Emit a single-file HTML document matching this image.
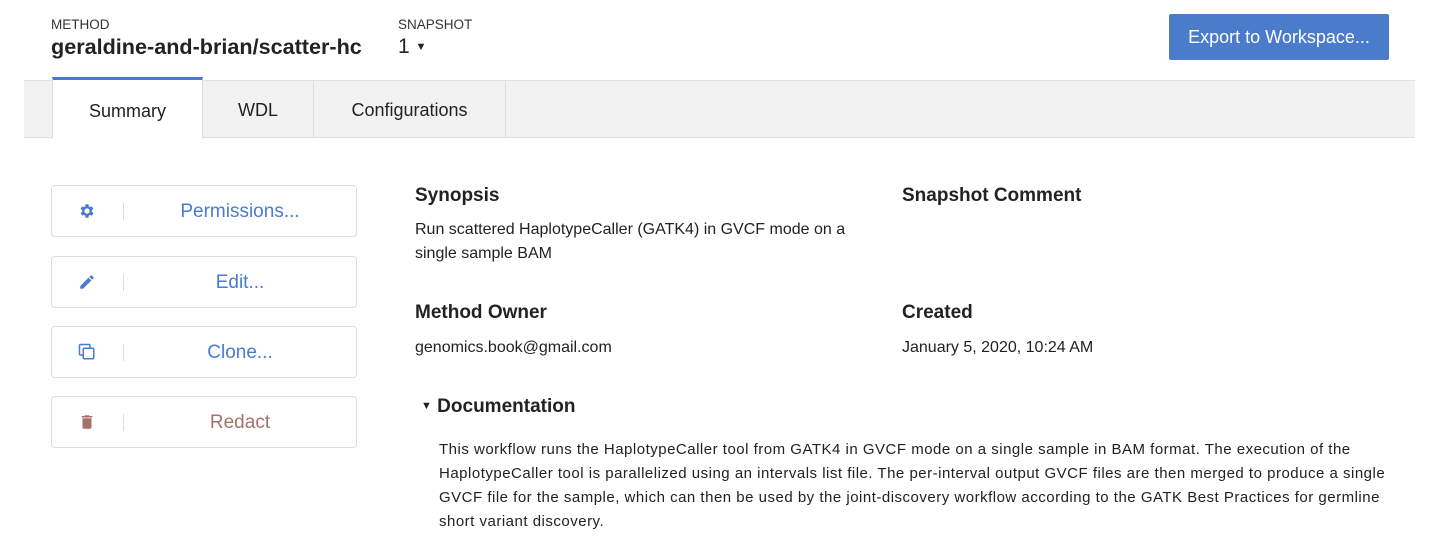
<!DOCTYPE html>
<html><head><meta charset="utf-8"><style>
*{margin:0;padding:0;box-sizing:border-box}
body{width:1439px;height:551px;background:#fff;font-family:"Liberation Sans",sans-serif;color:#2a2a2a;position:relative;overflow:hidden}
.a{position:absolute;white-space:nowrap}
.lbl{font-size:13.5px;color:#333}
.tabbar{position:absolute;left:24px;top:80px;width:1391px;height:58px;background:#f2f2f2;border-top:1px solid #e2e2e2;border-bottom:1px solid #ddd}
.tab{position:absolute;top:0;height:57px;font-size:18px;line-height:58px;text-align:center;border-right:1px solid #ddd;color:#222}
.btn{position:absolute;left:51px;width:306px;height:52px;border:1px solid #ddd;border-radius:4px;font-size:19px;color:#4a7bd0}
.btn .ic{position:absolute;left:26px;top:16px;width:18px;height:18px}
.btn .sep{position:absolute;left:71px;top:17px;width:1px;height:17px;background:#ddd}
.btn .t{position:absolute;left:72px;right:0;top:0;line-height:52px;text-align:center}
h3{position:absolute;font-size:19px;font-weight:bold;color:#222;white-space:nowrap}
.p{position:absolute;font-size:16px;line-height:24px;color:#222;white-space:nowrap}
</style></head><body>
<div class="a lbl" style="left:51px;top:17px">METHOD</div>
<div class="a" style="left:51px;top:34px;font-size:21.6px;font-weight:bold;color:#222">geraldine-and-brian/scatter-hc</div>
<div class="a lbl" style="left:398px;top:17px">SNAPSHOT</div>
<div class="a" style="left:398px;top:35px;font-size:21px;color:#222">1 <span style="font-size:11px;vertical-align:3px">▼</span></div>
<div class="a" style="left:1169px;top:14px;width:220px;height:46px;background:#4a7ccb;border-radius:2px;color:#fff;font-size:18px;line-height:46px;text-align:center">Export to Workspace...</div>
<div class="tabbar">
<div class="tab" style="left:28px;width:151px;background:#fff;top:-4px;height:62px;line-height:62px;border-top:3px solid #4a7bd0;border-left:1px solid #ddd">Summary</div>
<div class="tab" style="left:179px;width:111px">WDL</div>
<div class="tab" style="left:290px;width:192px">Configurations</div>
</div>

<div class="btn" style="top:185px"><svg class="ic" viewBox="0 0 24 24"><path fill="#4a7bd0" d="M19.4 13a7.5 7.5 0 000-2l2.1-1.6-2-3.5-2.5 1a7 7 0 00-1.7-1L15 3h-4l-.4 2.9a7 7 0 00-1.7 1l-2.5-1-2 3.5L6.6 11a7.5 7.5 0 000 2l-2.1 1.6 2 3.5 2.5-1a7 7 0 001.7 1L11 21h4l.4-2.9a7 7 0 001.7-1l2.5 1 2-3.5zM13 15.5a3.5 3.5 0 110-7 3.5 3.5 0 010 7z" transform="translate(-1 0)"/></svg><div class="sep"></div><div class="t">Permissions...</div></div>
<div class="btn" style="top:256px"><svg class="ic" viewBox="0 0 24 24"><path fill="#4a7bd0" d="M3 17.25V21h3.75L17.8 9.94l-3.75-3.75zM20.7 7.04a1 1 0 000-1.41l-2.34-2.34a1 1 0 00-1.41 0l-1.83 1.83 3.75 3.75z"/></svg><div class="sep"></div><div class="t">Edit...</div></div>
<div class="btn" style="top:326px"><svg class="ic" viewBox="0 0 24 24"><rect x="2" y="2" width="14" height="14" rx="1.5" fill="none" stroke="#4a7bd0" stroke-width="2"/><rect x="7" y="7" width="14" height="14" rx="1.5" fill="#fff" stroke="#4a7bd0" stroke-width="2"/></svg><div class="sep"></div><div class="t">Clone...</div></div>
<div class="btn" style="top:396px;color:#a4726c"><svg class="ic" viewBox="0 0 24 24"><path fill="#a4726c" d="M6 19a2 2 0 002 2h8a2 2 0 002-2V7H6zM19 4h-3.5l-1-1h-5l-1 1H5v2h14z"/></svg><div class="sep"></div><div class="t">Redact</div></div>

<h3 style="left:415px;top:185px">Synopsis</h3>
<div class="p" style="left:415px;top:218px">Run scattered HaplotypeCaller (GATK4) in GVCF mode on a<br>single sample BAM</div>
<h3 style="left:902px;top:185px">Snapshot Comment</h3>
<h3 style="left:415px;top:302px">Method Owner</h3>
<div class="p" style="left:415px;top:336px">genomics.book@gmail.com</div>
<h3 style="left:902px;top:302px">Created</h3>
<div class="p" style="left:902px;top:336px">January 5, 2020, 10:24 AM</div>
<h3 style="left:421px;top:396px"><span style="font-size:11px;vertical-align:3px">▼</span> Documentation</h3>
<div class="p" style="left:439px;top:438px;font-size:15px;letter-spacing:0.5px">This workflow runs the HaplotypeCaller tool from GATK4 in GVCF mode on a single sample in BAM format. The execution of the<br>HaplotypeCaller tool is parallelized using an intervals list file. The per-interval output GVCF files are then merged to produce a single<br>GVCF file for the sample, which can then be used by the joint-discovery workflow according to the GATK Best Practices for germline<br>short variant discovery.</div>
</body></html>
